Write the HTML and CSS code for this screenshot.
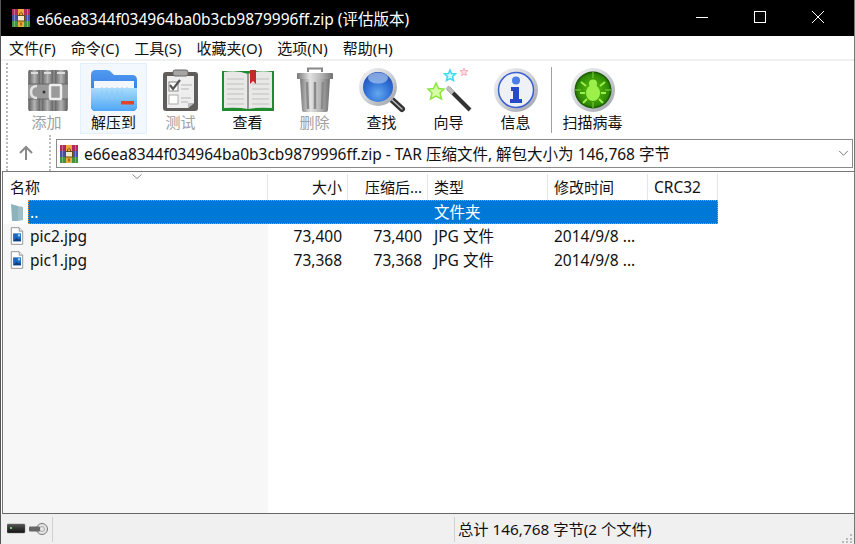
FILE: index.html
```html
<!DOCTYPE html>
<html lang="zh-CN">
<head>
  <meta charset="UTF-8">
  <title>e66ea8344f034964ba0b3cb9879996ff.zip (评估版本)</title>
  <link rel="stylesheet" href="styles.css">
</head>
<body>

  <svg class="defs" width="0" height="0">
    <defs>
      <symbol id="rar" viewBox="0 0 20 18">
        <rect x="1" y="0" width="18" height="6" fill="#b02a5e"/>
        <rect x="1" y="6" width="18" height="6" fill="#4650a8"/>
        <rect x="1" y="12" width="18" height="6" fill="#3f9440"/>
        <path d="M3 0h1v18H3zM16 0h1v18h-1z" fill="#fff" opacity=".3"/>
        <rect x="7" y="0" width="6" height="18" fill="#eda93c"/>
        <rect x="6.500" y="6.500" width="7" height="5.500" fill="#f4e9d2" stroke="#6b4a10"/>
        <path d="M8.500 6.500v-2q1.500-2 3 0v2" fill="none" stroke="#7a5314"/>
        <rect x="9" y="13.500" width="2" height="3" fill="#a8691a"/>
      </symbol>
      <symbol id="jpg" viewBox="0 0 16 20">
        <path d="M1.500 .5h9l4 4v15h-13z" fill="#fff" stroke="#8c8c8c"/>
        <path d="M10.500 .5v4h4" fill="#eee" stroke="#8c8c8c"/>
        <rect x="3.500" y="7" width="9" height="9" fill="#1769c4"/>
        <path d="M3.500 16l4-4 2 2 1.500-1 1.500 1.500V16z" fill="#0b3f80"/>
        <rect x="9" y="8" width="2.500" height="2.500" fill="#9fd2f5"/>
      </symbol>
      <linearGradient id="steel" x1="0" x2="1" y1="0" y2="0">
        <stop offset="0" stop-color="#777"/>
        <stop offset=".35" stop-color="#e2e2e2"/>
        <stop offset=".7" stop-color="#b0b0b0"/>
        <stop offset="1" stop-color="#707070"/>
      </linearGradient>
      <linearGradient id="band" x1="0" x2="1" y1="0" y2="0">
        <stop offset="0" stop-color="#666"/>
        <stop offset=".5" stop-color="#b4b4b4"/>
        <stop offset="1" stop-color="#666"/>
      </linearGradient>
      <linearGradient id="folderFront" x1="0" x2="0" y1="0" y2="1">
        <stop offset="0" stop-color="#a9dcfb"/>
        <stop offset="1" stop-color="#4ea6f5"/>
      </linearGradient>
      <linearGradient id="folderBack" x1="0" x2="0" y1="0" y2="1">
        <stop offset="0" stop-color="#4f9bf0"/>
        <stop offset="1" stop-color="#2560d8"/>
      </linearGradient>
      <linearGradient id="ring" x1="0" x2="1" y1="0" y2="1">
        <stop offset="0" stop-color="#f4f4f4"/>
        <stop offset=".5" stop-color="#cfd3d8"/>
        <stop offset="1" stop-color="#9a9ea4"/>
      </linearGradient>
      <radialGradient id="lens" cx=".5" cy=".72" r=".7">
        <stop offset="0" stop-color="#62a8ee"/>
        <stop offset=".6" stop-color="#2f6fd6"/>
        <stop offset="1" stop-color="#1f4fb5"/>
      </radialGradient>
      <radialGradient id="disc" cx=".5" cy=".5" r=".5">
        <stop offset="0" stop-color="#63c712"/>
        <stop offset=".85" stop-color="#2f8a06"/>
        <stop offset="1" stop-color="#164c03"/>
      </radialGradient>
      <linearGradient id="led" x1="0" x2="0" y1="0" y2="1">
        <stop offset="0" stop-color="#555"/>
        <stop offset="1" stop-color="#111"/>
      </linearGradient>
    </defs>
  </svg>

  <header class="titlebar">
    <svg class="titleicon"><use href="#rar"/></svg>
    <span class="titletext">e66ea8344f034964ba0b3cb9879996ff.zip (评估版本)</span>
    <div class="wincontrols">
      <svg class="winbtn" viewBox="0 0 58 36"><path d="M23 17.500h12" stroke="#fff" fill="none"/></svg>
      <svg class="winbtn" viewBox="0 0 58 36"><rect x="23.500" y="11.500" width="11" height="11" stroke="#fff" fill="none"/></svg>
      <svg class="winbtn" viewBox="0 0 58 36"><path d="M23 11l12 12M35 11L23 23" stroke="#fff" fill="none"/></svg>
    </div>
  </header>

  <nav class="menubar">
    <span>文件(F)</span>
    <span>命令(C)</span>
    <span>工具(S)</span>
    <span>收藏夹(O)</span>
    <span>选项(N)</span>
    <span>帮助(H)</span>
  </nav>

  <div class="toolbar">
    <div class="grip"></div>

    <div class="tool off">
      <svg class="toolicon" viewBox="0 0 48 46">
        <rect x="5" y="3" width="40" height="41" rx="2" fill="#858585"/>
        <rect x="6" y="3" width="11" height="41" fill="url(#band)"/>
        <rect x="19" y="3" width="11" height="41" fill="url(#band)"/>
        <rect x="32" y="3" width="12" height="41" fill="url(#band)"/>
        <path d="M8 6h7M21 6h7M34 6h8" stroke="#ddd" stroke-width="2"/>
        <rect x="5" y="17" width="40" height="15" fill="#9a9a9a"/>
        <path d="M5 17h40M5 32h40" stroke="#666"/>
        <path d="M14 19c-5 0-6 3-6 6s1 6 6 6" fill="none" stroke="#e2e2e2" stroke-width="2.500"/>
        <rect x="27" y="18" width="11" height="14" rx="1" fill="none" stroke="#eee" stroke-width="2.500"/>
        <circle cx="21" cy="25" r="1.500" fill="#333"/>
      </svg>
      <span>添加</span>
    </div>

    <div class="tool active">
      <svg class="toolicon" viewBox="0 0 48 46">
        <path d="M1 8q0-5 5-5h11q3 0 5 3l2 2h18q5 0 5 5v26q0 5-5 5H6q-5 0-5-5z" fill="url(#folderBack)"/>
        <rect x="4" y="14" width="40" height="12" fill="#f3f6fb"/>
        <path d="M12 20v6M17 20v6M22 20v6M27 20v6M32 20v6M37 20v6" stroke="#b7c6dc"/>
        <path d="M1 21h46v18q0 5-5 5H6q-5 0-5-5z" fill="url(#folderFront)"/>
        <path d="M12 23v10M17 23v10M22 23v10M27 23v10M32 23v10" stroke="#8cc9f6"/>
        <rect x="31" y="34" width="13" height="3.500" fill="#e0452c"/>
      </svg>
      <span>解压到</span>
    </div>

    <div class="tool off">
      <svg class="toolicon" viewBox="0 0 48 46">
        <rect x="6" y="5" width="35" height="39" rx="3" fill="#5f5c59"/>
        <path d="M10 9h27v27l-6 5H10z" fill="#eeeeee"/>
        <path d="M31 41l6-5h-6z" fill="#bbb"/>
        <rect x="16" y="3" width="15" height="6" rx="2" fill="#a5a5a5" stroke="#666"/>
        <rect x="12" y="15" width="9" height="9" fill="#fff" stroke="#888"/>
        <rect x="12" y="28" width="9" height="9" fill="#fff" stroke="#aaa"/>
        <path d="M13 18l3 4 7-9" fill="none" stroke="#555" stroke-width="2.200"/>
        <path d="M24 18h11M24 22h8M24 31h10M24 35h7" stroke="#b5b5b5"/>
      </svg>
      <span>测试</span>
    </div>

    <div class="tool">
      <svg class="toolicon" viewBox="0 0 48 46">
        <path d="M-2 4h52v40H-2z" fill="#1f8a2e"/>
        <path d="M0 5q14-2 24 2q10-4 24-2v36q-14-1-24 1q-10-2-24-1z" fill="#e8e8e6"/>
        <path d="M24 7v35" stroke="#999" stroke-width="2"/>
        <path d="M3 12h17M3 17h17M3 22h17M3 27h17M3 32h17M3 37h17M28 12h17M28 17h17M28 22h17M28 27h17M28 32h17M28 37h17" stroke="#c0c0be"/>
        <path d="M26 3h6v14l-3-3-3 3z" fill="#c62a26"/>
      </svg>
      <span>查看</span>
    </div>

    <div class="tool off">
      <svg class="toolicon" viewBox="0 0 48 46">
        <path d="M17 5V1.500h14V5" fill="none" stroke="#888" stroke-width="2"/>
        <path d="M7 6h34q1 0 1 1v5H6V7q0-1 1-1z" fill="url(#steel)"/>
        <path d="M9 12h30l-2 31q0 2-2 2H13q-2 0-2-2z" fill="url(#steel)"/>
        <path d="M16 15l1 27M24 15v27M32 15l-1 27" stroke="#8a8a8a" stroke-width="2.500"/>
      </svg>
      <span>删除</span>
    </div>

    <div class="tool">
      <svg class="toolicon" viewBox="0 0 48 46">
        <path d="M31 30l13 12" stroke="#333" stroke-width="6" stroke-linecap="round"/>
        <path d="M32 31l12 11" stroke="#bbb" stroke-width="1.500" stroke-linecap="round"/>
        <circle cx="20" cy="20" r="19" fill="url(#ring)"/>
        <circle cx="20" cy="20" r="15" fill="url(#lens)"/>
        <ellipse cx="20" cy="11" rx="10" ry="5.500" fill="#a8c4ee" opacity=".7"/>
      </svg>
      <span>查找</span>
    </div>

    <div class="tool">
      <svg class="toolicon" viewBox="0 0 48 46">
        <path d="M23 21l22 22" stroke="#333" stroke-width="4"/>
        <path d="M22 20l6 6" stroke="#bbb" stroke-width="4"/>
        <path d="M11 16l2.500 5.500 5.500.5-4 4 1.500 6-5.500-3-5.500 3 1.500-6-4-4 5.500-.5z" fill="#d6fca8" stroke="#8be63e" stroke-width="1.500"/>
        <path d="M25 3l1.500 3.500 4 .3-3 2.700 1 4-3.500-2-3.500 2 1-4-3-2.700 4-.3z" fill="#d6f8ff" stroke="#3ed8f5" stroke-width="1.500"/>
        <path d="M39 1l1 2.500 2.800.2-2 2 .6 2.800-2.400-1.400-2.400 1.400.6-2.800-2-2 2.800-.2z" fill="#ffe0e4" stroke="#f7aab4"/>
      </svg>
      <span>向导</span>
    </div>

    <div class="tool">
      <svg class="toolicon" viewBox="0 0 48 46">
        <circle cx="24" cy="23" r="22" fill="url(#ring)"/>
        <circle cx="24" cy="23" r="17.500" fill="#eef1f6" stroke="#3d5fd0" stroke-width="1.500"/>
        <circle cx="24" cy="13.500" r="4" fill="#4c7ee8"/>
        <path d="M19 20h8v12h3v4H18v-4h3v-8h-2z" fill="#2549c8"/>
      </svg>
      <span>信息</span>
    </div>

    <div class="toolsep"></div>

    <div class="tool">
      <svg class="toolicon" viewBox="0 0 48 46">
        <circle cx="24" cy="23" r="22" fill="url(#ring)"/>
        <circle cx="24" cy="23" r="18.500" fill="url(#disc)"/>
        <path d="M24 5v6M24 35v6M6 23h6M36 23h6" stroke="#7fd43a"/>
        <ellipse cx="24" cy="26" rx="7" ry="8" fill="#9cf04a"/>
        <circle cx="24" cy="16.500" r="4" fill="#9cf04a"/>
        <path d="M17 19l-5-4M31 19l5-4M16 26h-5M32 26h5M18 32l-4 4M30 32l4 4" stroke="#9cf04a" stroke-width="2"/>
      </svg>
      <span>扫描病毒</span>
    </div>
  </div>

  <div class="addressbar">
    <div class="grip"></div>
    <svg class="upicon" viewBox="0 0 16 16"><path d="M8 15V2M2 8l6-6 6 6" fill="none" stroke="#8a8a8a" stroke-width="2"/></svg>
    <div class="grip"></div>
    <div class="pathbox">
      <svg class="pathicon"><use href="#rar"/></svg>
      <span class="pathtext">e66ea8344f034964ba0b3cb9879996ff.zip - TAR 压缩文件, 解包大小为 146,768 字节</span>
      <svg class="chevron" viewBox="0 0 12 8"><path d="M1 1l5 5 5-5" fill="none" stroke="#666"/></svg>
    </div>
  </div>

  <main class="filelist">
    <div class="listhead">
      <div class="hcell namecol">名称<svg class="sortmark" viewBox="0 0 10 5"><path d="M.5 .5L5 4.500 9.500 .5" fill="none" stroke="#888"/></svg></div>
      <div class="hcell num">大小</div>
      <div class="hcell num">压缩后...</div>
      <div class="hcell">类型</div>
      <div class="hcell">修改时间</div>
      <div class="hcell crc">CRC32</div>
    </div>

    <div class="listbody">
      <div class="row">
        <div class="rowicon parent">
          <svg class="foldericon" viewBox="0 0 14 17"><path d="M1 0l7 2v15H2z" fill="#8db4bc"/><path d="M8 2l5 1v13l-5 1z" fill="#9cc0c6"/></svg>
        </div>
        <div class="cells selected">
          <div>..</div><div></div><div></div><div>文件夹</div><div></div><div></div>
        </div>
      </div>
      <div class="row">
        <div class="rowicon"><svg class="fileicon"><use href="#jpg"/></svg></div>
        <div class="cells">
          <div>pic2.jpg</div><div class="num">73,400</div><div class="num">73,400</div><div>JPG 文件</div><div>2014/9/8 ...</div><div></div>
        </div>
      </div>
      <div class="row">
        <div class="rowicon"><svg class="fileicon"><use href="#jpg"/></svg></div>
        <div class="cells">
          <div>pic1.jpg</div><div class="num">73,368</div><div class="num">73,368</div><div>JPG 文件</div><div>2014/9/8 ...</div><div></div>
        </div>
      </div>
    </div>
  </main>

  <footer class="statusbar">
    <div class="statusicons">
      <svg class="statusicon" viewBox="0 0 42 12">
        <rect x="0" y="1" width="18" height="9" rx="1" fill="url(#led)" stroke="#777" stroke-width=".5"/>
        <rect x="3" y="4" width="2" height="2" fill="#7c7"/>
        <circle cx="35" cy="6" r="5.500" fill="#e6e6e6" stroke="#777"/>
        <circle cx="35" cy="6" r="2.500" fill="none" stroke="#aaa"/>
        <rect x="22" y="3.500" width="11" height="5" rx="1" fill="#666"/>
      </svg>
    </div>
    <div class="statustext">总计 146,768 字节(2 个文件)</div>
    <svg class="resizer" viewBox="0 0 12 10"><path d="M9 1h2v2H9zM5 5h2v2H5zM9 5h2v2H9zM1 8h2v2H1zM5 8h2v2H5zM9 8h2v2H9z" fill="#bbb"/></svg>
  </footer>

</body>
</html>
```

FILE: styles.css
```css
html, body {
  margin: 0;
  padding: 0;
  height: 100%;
}

body {
  font-family: "Noto Sans", "Noto Sans CJK SC", sans-serif;
  font-size: 15px;
  color: #111;
  background-color: #ffffff;
  display: flex;
  flex-direction: column;
  height: 100vh;
  overflow: hidden;
  box-sizing: border-box;
  border-left: 1px solid #555;
  border-right: 1px solid #777;
}

.defs {
  display: block;
  height: 0;
}

.titlebar {
  height: 36px;
  flex: none;
  background-color: #000;
  color: #fff;
  font-size: 15.5px;
  display: flex;
  align-items: center;
  margin: 0 -1px;
  padding-left: 11px;
}

.titleicon {
  width: 20px;
  height: 18px;
  margin-right: 5px;
}

.titletext {
  flex: 1;
  white-space: nowrap;
}

.wincontrols {
  display: flex;
  margin-right: 8px;
}

.winbtn {
  width: 58px;
  height: 36px;
  display: block;
}

.menubar {
  height: 23px;
  flex: none;
  display: flex;
  align-items: center;
  gap: 15px;
  padding-left: 8px;
  white-space: nowrap;
  border-bottom: 2px solid #f0f0f0;
}

.toolbar {
  height: 74px;
  flex: none;
  display: flex;
  align-items: stretch;
  padding-left: 5px;
  padding-top: 2px;
  box-sizing: border-box;
}

.grip {
  width: 0;
  flex: none;
  border-left: 2px dotted #bbb;
  margin-right: 5px;
  margin-bottom: 2px;
}

.tool {
  width: 67px;
  height: 71px;
  box-sizing: border-box;
  flex: none;
  display: flex;
  flex-direction: column;
  align-items: center;
  padding-top: 3px;
  font-size: 15px;
  line-height: 20px;
  color: #111;
  border: 1px solid transparent;
}

.tool span {
  white-space: nowrap;
  margin-top: -1px;
}

.tool.off {
  color: #a0a0a0;
}

.tool.active {
  background-color: #f2f8fe;
  border-color: #e3f0fc;
}

.toolicon {
  width: 48px;
  height: 46px;
  flex: none;
  overflow: visible;
}

.toolsep {
  width: 1px;
  flex: none;
  background-color: #a0a0a0;
  margin: 4px 7px 2px 2px;
}

.addressbar {
  height: 36px;
  flex: none;
  display: flex;
  align-items: center;
  padding-left: 5px;
  box-sizing: border-box;
  padding-right: 1px;
  font-size: 15.5px;
}

.addressbar .grip {
  align-self: stretch;
  margin: 0;
}

.upicon {
  width: 16px;
  height: 16px;
  flex: none;
  margin: 0 15px 0 10px;
}

.pathbox {
  flex: 1;
  height: 29px;
  box-sizing: border-box;
  border: 1px solid #8a8a8a;
  display: flex;
  align-items: center;
  padding-left: 2px;
  white-space: nowrap;
  margin-top: 1px;
  margin-left: 5px;
}

.pathicon {
  width: 20px;
  height: 18px;
  margin-right: 5px;
  flex: none;
}

.pathtext {
  flex: 1;
}

.chevron {
  width: 11px;
  height: 7px;
  margin-right: 3px;
  flex: none;
}

.filelist {
  flex: 1;
  display: flex;
  flex-direction: column;
  border-top: 1px solid #777;
  border-bottom: 1px solid #666;
  border-left: 1px solid #777;
  margin-left: 1px;
  min-height: 0;
}

.listhead {
  display: grid;
  grid-template-columns: 265px 80px 80px 120px 100px 70px;
  height: 26px;
  flex: none;
  margin-top: 2px;
}

.hcell {
  border-right: 1px solid #e5e5e5;
  padding: 1px 5px 0 6px;
  line-height: 24px;
  white-space: nowrap;
}

.hcell.crc {
  font-size: 15.5px;
}

.namecol {
  position: relative;
  padding-left: 7px;
}

.sortmark {
  position: absolute;
  left: 129px;
  top: 0;
  width: 10px;
  height: 5px;
}

.num {
  text-align: right;
}

.listbody {
  flex: 1;
  background: linear-gradient(to right, #f7f7f7 265px, #ffffff 265px);
  font-size: 15.5px;
}

.row {
  display: flex;
  height: 24px;
  white-space: nowrap;
}

.rowicon {
  width: 25px;
  flex: none;
  display: flex;
  align-items: center;
  justify-content: center;
  padding-left: 2px;
  box-sizing: border-box;
}

.rowicon.parent {
  background-color: #fff;
}

.foldericon {
  width: 14px;
  height: 17px;
}

.fileicon {
  width: 14px;
  height: 18px;
}

.cells {
  display: grid;
  grid-template-columns: 240px 80px 80px 120px 100px 70px;
  flex: none;
  box-sizing: border-box;
}

.cells > div {
  padding: 1px 6px 0 2px;
  line-height: 23px;
}

.cells > div:nth-child(n+4) {
  padding-left: 6px;
}

.cells.selected {
  background-color: #0078d7;
  color: #fff;
  outline: 1px dotted #f08a24;
  outline-offset: -1px;
}

.statusbar {
  height: 30px;
  flex: none;
  background-color: #f0f0f0;
  display: flex;
  align-items: center;
  position: relative;
  margin: 0 -1px;
  padding-left: 1px;
  font-size: 15.3px;
}

.statusicons {
  width: 52px;
  height: 25px;
  box-sizing: border-box;
  border-right: 1px solid #d0d0d0;
  display: flex;
  align-items: center;
  padding-left: 6px;
}

.statusicon {
  width: 42px;
  height: 12px;
}

.statustext {
  margin-left: 401px;
  padding-left: 3px;
  height: 25px;
  line-height: 25px;
  border-left: 1px solid #d0d0d0;
  white-space: nowrap;
}

.resizer {
  position: absolute;
  right: 2px;
  bottom: 1px;
  width: 12px;
  height: 10px;
}
```
